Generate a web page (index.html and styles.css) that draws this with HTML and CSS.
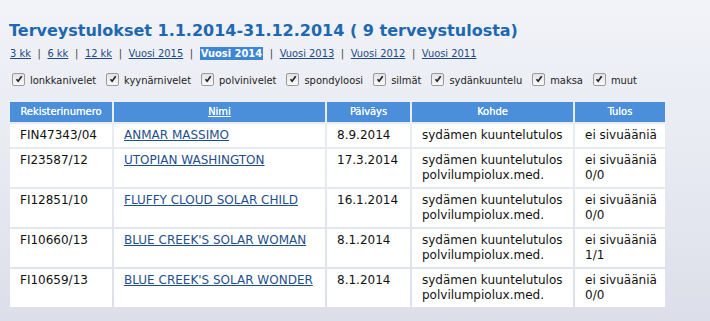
FILE: index.html
```html
<!DOCTYPE html>
<html lang="fi">
<head>
<meta charset="utf-8">
<title>Terveystulokset</title>
<link rel="stylesheet" href="styles.css">
</head>
<body>
<div class="page">
  <h1 class="title">Terveystulokset 1.1.2014-31.12.2014 ( 9 terveystulosta)</h1>
  <div class="periods">
    <a href="#">3 kk</a><span class="sep">|</span><a href="#">6 kk</a><span class="sep">|</span><a href="#">12 kk</a><span class="sep">|</span><a href="#">Vuosi 2015</a><span class="sep">|</span><span class="current">Vuosi 2014</span><span class="sep">|</span><a href="#">Vuosi 2013</a><span class="sep">|</span><a href="#">Vuosi 2012</a><span class="sep">|</span><a href="#">Vuosi 2011</a>
  </div>
  <div class="filters">
    <label class="filter"><span class="cb"><svg viewBox="0 0 12 12" width="12" height="12"><path d="M3 6.2 L5 8.6 L9.2 2.8" fill="none" stroke="#222" stroke-width="2"/></svg></span>lonkkanivelet</label>
    <label class="filter"><span class="cb"><svg viewBox="0 0 12 12" width="12" height="12"><path d="M3 6.2 L5 8.6 L9.2 2.8" fill="none" stroke="#222" stroke-width="2"/></svg></span>kyynärnivelet</label>
    <label class="filter"><span class="cb"><svg viewBox="0 0 12 12" width="12" height="12"><path d="M3 6.2 L5 8.6 L9.2 2.8" fill="none" stroke="#222" stroke-width="2"/></svg></span>polvinivelet</label>
    <label class="filter"><span class="cb"><svg viewBox="0 0 12 12" width="12" height="12"><path d="M3 6.2 L5 8.6 L9.2 2.8" fill="none" stroke="#222" stroke-width="2"/></svg></span>spondyloosi</label>
    <label class="filter"><span class="cb"><svg viewBox="0 0 12 12" width="12" height="12"><path d="M3 6.2 L5 8.6 L9.2 2.8" fill="none" stroke="#222" stroke-width="2"/></svg></span>silmät</label>
    <label class="filter"><span class="cb"><svg viewBox="0 0 12 12" width="12" height="12"><path d="M3 6.2 L5 8.6 L9.2 2.8" fill="none" stroke="#222" stroke-width="2"/></svg></span>sydänkuuntelu</label>
    <label class="filter"><span class="cb"><svg viewBox="0 0 12 12" width="12" height="12"><path d="M3 6.2 L5 8.6 L9.2 2.8" fill="none" stroke="#222" stroke-width="2"/></svg></span>maksa</label>
    <label class="filter"><span class="cb"><svg viewBox="0 0 12 12" width="12" height="12"><path d="M3 6.2 L5 8.6 L9.2 2.8" fill="none" stroke="#222" stroke-width="2"/></svg></span>muut</label>
  </div>
  <table class="results">
    <thead>
      <tr>
        <th class="c1">Rekisterinumero</th>
        <th class="c2"><a href="#">Nimi</a></th>
        <th class="c3">Päiväys</th>
        <th class="c4">Kohde</th>
        <th class="c5">Tulos</th>
      </tr>
    </thead>
    <tbody>
      <tr>
        <td>FIN47343/04</td>
        <td><a href="#">ANMAR MASSIMO</a></td>
        <td>8.9.2014</td>
        <td>sydämen kuuntelutulos</td>
        <td>ei sivuääniä</td>
      </tr>
      <tr>
        <td>FI23587/12</td>
        <td><a href="#">UTOPIAN WASHINGTON</a></td>
        <td>17.3.2014</td>
        <td>sydämen kuuntelutulos<br>polvilumpiolux.med.</td>
        <td>ei sivuääniä<br>0/0</td>
      </tr>
      <tr>
        <td>FI12851/10</td>
        <td><a href="#">FLUFFY CLOUD SOLAR CHILD</a></td>
        <td>16.1.2014</td>
        <td>sydämen kuuntelutulos<br>polvilumpiolux.med.</td>
        <td>ei sivuääniä<br>0/0</td>
      </tr>
      <tr>
        <td>FI10660/13</td>
        <td><a href="#">BLUE CREEK'S SOLAR WOMAN</a></td>
        <td>8.1.2014</td>
        <td>sydämen kuuntelutulos<br>polvilumpiolux.med.</td>
        <td>ei sivuääniä<br>1/1</td>
      </tr>
      <tr>
        <td>FI10659/13</td>
        <td><a href="#">BLUE CREEK'S SOLAR WONDER</a></td>
        <td>8.1.2014</td>
        <td>sydämen kuuntelutulos<br>polvilumpiolux.med.</td>
        <td>ei sivuääniä<br>0/0</td>
      </tr>
    </tbody>
  </table>
</div>
</body>
</html>
```

FILE: styles.css
```css
html, body {
  margin: 0;
  padding: 0;
  height: 100%;
}
body {
  background: linear-gradient(to bottom, #f1f3f8 0%, #e6e9f1 55%, #dcdfe9 100%);
  font-family: "DejaVu Sans", Verdana, sans-serif;
  color: #111;
  overflow: hidden;
}
.page {
  padding: 21px 0 0 8px;
}
.title {
  margin: 0 0 0 1px;
  font-size: 16px;
  line-height: 20px;
  font-weight: bold;
  color: #1d68b0;
}
.periods {
  margin-top: 6px;
  margin-left: 2px;
  font-family: "DejaVu Sans Condensed", "DejaVu Sans", sans-serif;
  font-stretch: condensed;
  font-size: 11px;
  line-height: 14px;
  color: #444;
}
.periods a {
  color: #1f4a88;
}
.periods .sep {
  margin: 0 6.6px;
}
.periods .current {
  background: #3d86d4;
  color: #fff;
  font-weight: bold;
  padding: 0 1px;
}
.filters {
  margin-top: 13px;
  margin-left: 4px;
  display: flex;
  align-items: center;
  font-family: "DejaVu Sans Condensed", "DejaVu Sans", sans-serif;
  font-stretch: condensed;
  font-size: 11px;
  line-height: 14px;
  color: #222;
}
.filter {
  display: flex;
  align-items: center;
  margin-right: 10px;
}
.cb {
  width: 11px;
  height: 11px;
  border: 1px solid #9a9a9a;
  border-radius: 2px;
  background: linear-gradient(to bottom, #e2e2e2, #fafafa);
  margin-right: 5px;
  display: flex;
  align-items: center;
  justify-content: center;
  position: relative;
  top: -2px;
}
.cb svg {
  width: 10px;
  height: 10px;
}
.results {
  margin-top: 12px;
  border-collapse: separate;
  border-spacing: 2px;
  width: 659px;
  table-layout: fixed;
}
.results th {
  background: #4b8fdb;
  color: #fff;
  font-family: "DejaVu Sans Condensed", "DejaVu Sans", sans-serif;
  font-stretch: condensed;
  font-size: 11px;
  font-weight: normal;
  text-shadow: 0 0 0.4px #fff;
  height: 20px;
  padding: 0;
  line-height: 20px;
  text-align: center;
}
.results th a {
  color: #fff;
}
.results td {
  background: #fff;
  font-size: 12px;
  line-height: 15px;
  padding: 4px 0 4px 10px;
  vertical-align: top;
  white-space: nowrap;
  overflow: hidden;
  color: #111;
}
.results td a {
  color: #1f4e8c;
}
.c1 { width: 102px; }
.c2 { width: 211px; }
.c3 { width: 83px; }
.c4 { width: 161px; }
.c5 { width: 90px; }
```
